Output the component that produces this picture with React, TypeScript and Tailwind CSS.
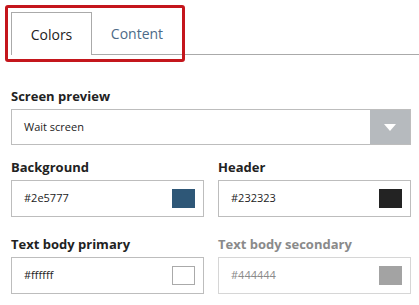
function ColorField({ label, value, swatch, muted }: { label: string; value: string; swatch: string; muted?: boolean }) {
  return (
    <div>
      <div className={`text-[13px] font-bold leading-4 ${muted ? "text-[#8a8a8a]" : "text-[#222]"}`}>{label}</div>
      <div className={`mt-[5px] h-[37px] flex items-center justify-between pl-3 pr-2 border bg-white ${muted ? "border-[#d6d6d6]" : "border-[#bdbdbd]"}`}>
        <span className={`text-[11px] ${muted ? "text-[#8a8a8a]" : "text-[#222]"}`}>{value}</span>
        <span className={`w-[23px] h-[19px] ${swatch}`} />
      </div>
    </div>
  );
}

export default function App() {
  return (
    <div className="relative w-[419px] h-[305px] bg-white font-['Open_Sans',sans-serif] overflow-hidden">
      <div className="pt-3 pl-[11px]">
        <div className="flex border-b border-[#aaa] h-[43px]">
          <div className="w-[81px] h-[43px] bg-white border-l border-t border-r border-[#aaa] flex items-center justify-center text-[14px] text-[#222]">Colors</div>
          <div className="w-[90px] flex items-center justify-center text-[14px] text-[#4c6a88]">Content</div>
        </div>
      </div>
      <div className="absolute left-[5px] top-[5px] w-[180px] h-[57px] border-[3px] border-[#c4161c] rounded-[3px]" />

      <div className="px-[11px] pr-[8px] pt-[33px]">
        <div className="text-[13px] font-bold leading-4 text-[#222]">Screen preview</div>
        <div className="mt-[5px] h-[36px] flex border border-[#bdbdbd]">
          <div className="flex-1 flex items-center pl-3 text-[11px] text-[#222]">Wait screen</div>
          <div className="w-[40px] bg-[#b6babe] flex items-center justify-center">
            <svg width="12" height="7" viewBox="0 0 12 7"><path d="M0 0h12L6 7z" fill="#fff" /></svg>
          </div>
        </div>
        <div className="mt-[14px] grid grid-cols-2 gap-x-[14px] gap-y-[19px]">
          <ColorField label="Background" value="#2e5777" swatch="bg-[#2e5777]" />
          <ColorField label="Header" value="#232323" swatch="bg-[#232323]" />
          <ColorField label="Text body primary" value="#ffffff" swatch="bg-white border border-[#aaa]" />
          <ColorField label="Text body secondary" value="#444444" swatch="bg-[#a3a3a3]" muted />
        </div>
      </div>
    </div>
  );
}
